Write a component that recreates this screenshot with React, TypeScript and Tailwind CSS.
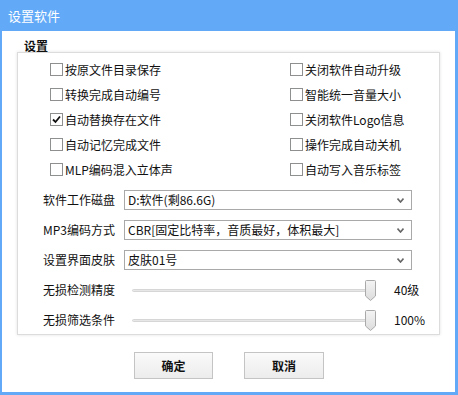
import React from "react";

const font = { fontFamily: '"Noto Sans CJK SC", "Liberation Sans", sans-serif' };

function Checkbox({ checked, label }: { checked?: boolean; label: string }) {
  return (
    <div className="flex h-[25px] items-center">
      <div className="relative h-[13px] w-[13px] shrink-0 border border-[#8e8f8f] bg-white">
        {checked && (
          <svg className="absolute left-[1px] top-[1px]" width="9" height="9" viewBox="0 0 9 9">
            <path d="M1 4.5 L3.5 7 L8 1.5" stroke="#111" strokeWidth="1.8" fill="none" />
          </svg>
        )}
      </div>
      <span className="ml-[2px] text-[12px] leading-none text-[#111]">{label}</span>
    </div>
  );
}

function Select({ label, value }: { label: string; value: string }) {
  return (
    <div className="flex h-[30px] items-center">
      <span className="w-[81px] shrink-0 text-[12px] leading-none text-[#111]">{label}</span>
      <div className="flex h-[20px] w-[288px] items-center justify-between border border-[#a9a9a9] bg-white pl-[3px] pr-[7px]">
        <span className="text-[12px] leading-none text-[#111]">{value}</span>
        <svg width="7" height="5" viewBox="0 0 7 5">
          <path d="M0.5 0.5 L3.5 4 L6.5 0.5" stroke="#666" strokeWidth="1.6" fill="none" />
        </svg>
      </div>
    </div>
  );
}

function Slider({ label, value }: { label: string; value: string }) {
  return (
    <div className="flex h-[30px] items-center">
      <span className="w-[89px] shrink-0 text-[12px] leading-none text-[#111]">{label}</span>
      <div className="relative h-[20px] w-[244px]">
        <div className="absolute left-0 right-[5px] top-[9px] h-[3px] rounded-sm border border-[#d6d6d6] bg-[#e7e7e7]" />
        <svg className="absolute right-0 top-0" width="11" height="21" viewBox="0 0 11 21">
          <defs>
            <linearGradient id="tg" x1="0" y1="0" x2="0" y2="1">
              <stop offset="0" stopColor="#f4f4f4" />
              <stop offset="1" stopColor="#dcdcdc" />
            </linearGradient>
          </defs>
          <path d="M0.5 1.5 Q0.5 0.5 1.5 0.5 L9.5 0.5 Q10.5 0.5 10.5 1.5 L10.5 16 L5.5 20.5 L0.5 16 Z" fill="url(#tg)" stroke="#a9a9a9" />
        </svg>
      </div>
      <span className="ml-[18px] text-[12px] leading-none text-[#111]">{value}</span>
    </div>
  );
}

export default function App() {
  return (
    <div style={font} className="flex h-[395px] w-[458px] flex-col bg-[#62aaf8] pb-[3px] pl-[2px] pr-[3px]">
      <div className="flex h-[31px] shrink-0 items-center pl-[6px] text-[13px] text-white">设置软件</div>
      <div className="flex flex-1 flex-col bg-white">
        <div className="ml-[22px] mt-[8px] h-[13px] text-[12px] font-bold leading-[13px] text-[#111]">设置</div>
        <div className="ml-[15px] h-[283px] w-[423px] border border-[#dcdcdc] bg-white pt-[4px] shadow-[0_0_3px_rgba(0,0,0,0.12)]">
          <div className="grid grid-cols-[240px_1fr] pl-[32px]">
            <Checkbox label="按原文件目录保存" />
            <Checkbox label="关闭软件自动升级" />
            <Checkbox label="转换完成自动编号" />
            <Checkbox label="智能统一音量大小" />
            <Checkbox checked label="自动替换存在文件" />
            <Checkbox label="关闭软件Logo信息" />
            <Checkbox label="自动记忆完成文件" />
            <Checkbox label="操作完成自动关机" />
            <Checkbox label="MLP编码混入立体声" />
            <Checkbox label="自动写入音乐标签" />
          </div>
          <div className="mt-[3px] pl-[25px]">
            <Select label="软件工作磁盘" value="D:软件(剩86.6G)" />
            <Select label="MP3编码方式" value="CBR[固定比特率，音质最好，体积最大]" />
            <Select label="设置界面皮肤" value="皮肤01号" />
            <Slider label="无损检测精度" value="40级" />
            <Slider label="无损筛选条件" value="100%" />
          </div>
        </div>
        <div className="mt-[17px] flex pl-[132px]">
          <button className="h-[27px] w-[79px] border border-[#c4c4c4] bg-gradient-to-b from-[#fafafa] to-[#ececec] text-[12px] font-bold text-[#111]">
            确定
          </button>
          <button className="ml-[31px] h-[27px] w-[80px] border border-[#c4c4c4] bg-gradient-to-b from-[#fafafa] to-[#ececec] text-[12px] font-bold text-[#111]">
            取消
          </button>
        </div>
      </div>
    </div>
  );
}
